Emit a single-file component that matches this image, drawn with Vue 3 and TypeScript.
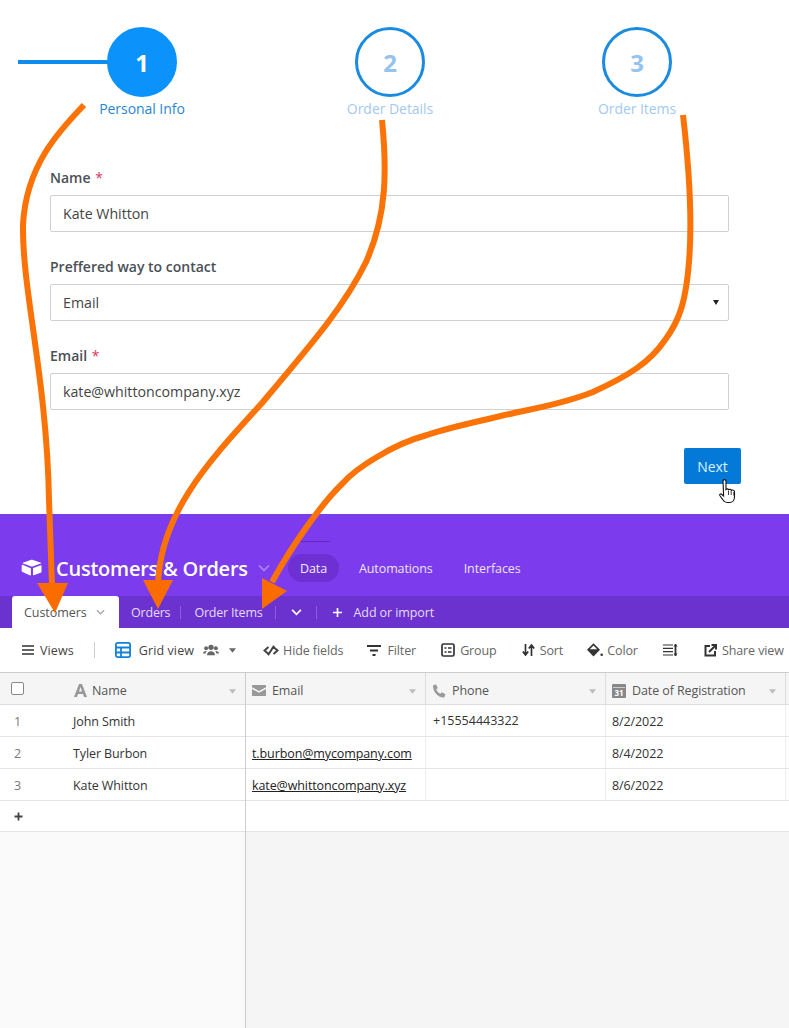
<script setup lang="ts">
const steps = [
  { n: 1, label: 'Personal Info', active: true },
  { n: 2, label: 'Order Details', active: false },
  { n: 3, label: 'Order Items', active: false },
]
const rows = [
  { n: 1, name: 'John Smith', email: '', phone: '+15554443322', date: '8/2/2022' },
  { n: 2, name: 'Tyler Burbon', email: 't.burbon@mycompany.com', phone: '', date: '8/4/2022' },
  { n: 3, name: 'Kate Whitton', email: 'kate@whittoncompany.xyz', phone: '', date: '8/6/2022' },
]
</script>

<template>
  <div class="page">
    <section class="wizard">
      <div class="stepper">
        <div v-for="s in steps" :key="s.n" class="step" :class="{ active: s.active }">
          <div class="circle">{{ s.n }}</div>
          <div class="step-label">{{ s.label }}</div>
        </div>
      </div>
      <form class="form" @submit.prevent>
        <div class="field">
          <div class="label">Name <span class="req">*</span></div>
          <div class="input">Kate Whitton</div>
        </div>
        <div class="field">
          <div class="label">Preffered way to contact</div>
          <div class="input select">Email<span class="caret"></span></div>
        </div>
        <div class="field">
          <div class="label">Email <span class="req">*</span></div>
          <div class="input">kate@whittoncompany.xyz</div>
        </div>
      </form>
      <div class="actions"><button class="next" type="button">Next</button></div>
    </section>

    <section class="base">
      <header class="topbar">
        <span class="notch"></span>
        <div class="brand">
          <svg class="logo" viewBox="0 0 22 20" width="22" height="18" preserveAspectRatio="none">
            <path fill="#fff" d="M9.600 1.100 2 4.200c-.5.200-.5.600 0 .8l7.700 3c.8.300 1.600.3 2.400 0l7.800-3c.5-.2.500-.6 0-.8l-7.900-3.100c-.8-.3-1.600-.3-2.400 0z" />
            <path fill="#fff" d="M12 10.500v7.100c0 .4.400.6.700.5l7.500-3.100c.2-.1.300-.3.300-.5V7.400c0-.4-.4-.6-.7-.5l-7.600 3.100c-.2.100-.2.300-.2.500z" />
            <path fill="#fff" d="M9.700 10.200 1.500 6.500C1.100 6.400.700 6.600.700 7v6.700c0 .2.100.4.300.5l8.200 4c.3.100.7-.1.700-.5v-7c0-.2-.1-.4-.2-.5z" />
          </svg>
          <span class="title">Customers &amp; Orders</span>
          <svg class="title-chev" viewBox="0 0 12 8" width="12" height="8"><path d="M1 1.500 6 6.500 11 1.500" fill="none" stroke="#a77cf3" stroke-width="1.800" /></svg>
        </div>
        <nav class="topnav">
          <span class="pill">Data</span>
          <span class="navitem">Automations</span>
          <span class="navitem">Interfaces</span>
        </nav>
      </header>

      <div class="tabs">
        <div class="tab-active">Customers
          <svg viewBox="0 0 10 6" width="9" height="6"><path d="M1 1 5 5 9 1" fill="none" stroke="#aaa" stroke-width="1.500" /></svg>
        </div>
        <span class="tab first">Orders</span>
        <i class="sep"></i>
        <span class="tab">Order Items</span>
        <i class="sep"></i>
        <svg class="more" viewBox="0 0 12 8" width="11" height="7"><path d="M1 1 6 6 11 1" fill="none" stroke="#fff" stroke-width="2" /></svg>
        <i class="sep"></i>
        <span class="add"><svg viewBox="0 0 12 12" width="11" height="11"><path d="M6 1v10M1 6h10" stroke="#fff" stroke-width="1.800" /></svg>Add or import</span>
      </div>

      <div class="toolbar">
        <span class="tool views">
          <svg viewBox="0 0 12 10" width="12" height="10"><path d="M0 1h12M0 5h12M0 9h12" stroke="#333" stroke-width="1.600" /></svg>
          <b>Views</b>
        </span>
        <i class="tool-sep"></i>
        <span class="tool grid-view">
          <svg viewBox="0 0 16 16" width="16" height="16">
            <rect x="0.900" y="0.900" width="14.200" height="14.200" rx="1.800" fill="#fff" stroke="#1283da" stroke-width="1.800" />
            <path d="M1 5.500h14M1 10.500h14M6 5.500v10" stroke="#1283da" stroke-width="1.800" />
          </svg>
          <b>Grid view</b>
          <svg class="people" viewBox="0 0 18 13" width="16" height="12">
            <circle cx="9" cy="3.500" r="3" fill="#666" /><circle cx="3.500" cy="4.500" r="2.200" fill="#666" /><circle cx="14.500" cy="4.500" r="2.200" fill="#666" />
            <path d="M4.500 12.500c0-3 2-4.500 4.500-4.500s4.500 1.500 4.500 4.500zM0 10.500c0-2 1.500-3 3.500-3 .5 0 .7.200 .7.200C3.500 8.500 3 9.500 3 10.500zM18 10.500c0-2-1.500-3-3.500-3-.5 0-.7.200-.7.200.7.800 1.200 1.800 1.200 2.800z" fill="#666" />
          </svg>
          <svg class="tri" viewBox="0 0 8 5" width="7" height="5"><path d="M0 0h8L4 5z" fill="#666" /></svg>
        </span>
        <span class="tool hide">
          <svg viewBox="0 0 16 11" width="16" height="11"><path d="M5.500 2 1.500 5.500l4 3.500M10.500 2l4 3.500-4 3.500M11 .7 5 10.300" fill="none" stroke="#444" stroke-width="2" /></svg>
          Hide fields
        </span>
        <span class="tool filter">
          <svg viewBox="0 0 14 11" width="14" height="11"><path d="M0 1h14M3 5.500h8M5.500 10h3" stroke="#333" stroke-width="2" /></svg>
          Filter
        </span>
        <span class="tool group">
          <svg viewBox="0 0 14 14" width="14" height="14"><rect x="1" y="1" width="12" height="12" rx="1.500" fill="none" stroke="#333" stroke-width="1.700" /><path d="M3.500 5h2M7 5h3.500M3.500 9h2M7 9h3.500" stroke="#333" stroke-width="1.700" /></svg>
          Group
        </span>
        <span class="tool sort">
          <svg viewBox="0 0 13 12" width="13" height="12"><path d="M3.500 0v10M.8 7.500l2.700 3.500 2.700-3.500M9.500 12V2M6.800 4.500 9.500 1l2.700 3.500" fill="none" stroke="#333" stroke-width="1.700" /></svg>
          Sort
        </span>
        <span class="tool color">
          <svg viewBox="0 0 16 14" width="16" height="14"><path d="M6.500 .2 13 6.700 6.500 13.500 0 6.700z" fill="#333" /><path d="M6.500 2.600 10.200 6.300H2.800z" fill="#fff" /><circle cx="14.700" cy="11.700" r="1.300" fill="#333" /></svg>
          Color
        </span>
        <span class="tool density">
          <svg viewBox="0 0 15 12" width="15" height="12"><path d="M0 1h10M0 4.300h10M0 7.700h10M0 11h10" stroke="#333" stroke-width="1.200" /><path d="M12.500 0v12" stroke="#333" stroke-width="1.800" /><path d="M10.500 2.500 12.500 0l2 2.500zM10.500 9.500l2 2.500 2-2.500z" fill="#333" /></svg>
        </span>
        <span class="tool share">
          <svg viewBox="0 0 13 13" width="13" height="13"><path d="M6 2H1.500v9.500H11V7" fill="none" stroke="#333" stroke-width="2" /><path d="M5 8l6-6M7.500 1H12v4.500" fill="none" stroke="#333" stroke-width="2" /></svg>
          Share view
        </span>
      </div>

      <div class="table">
        <div class="left">
          <div class="head-row left-head">
            <span class="check"></span>
            <svg class="ficon a" viewBox="0 0 13 13" width="13" height="13"><path d="M5 0h3l5 13h-3l-1-3H4l-1 3H0zM6.500 3 5 7.500h3z" fill="#999" fill-rule="evenodd" /></svg>
            <span class="hname">Name</span>
            <svg class="tri-h" viewBox="0 0 8 5" width="7" height="5"><path d="M0 0h8L4 5z" fill="#bbb" /></svg>
          </div>
          <div v-for="r in rows" :key="r.n" class="row left-row">
            <span class="num">{{ r.n }}</span><span class="name">{{ r.name }}</span>
          </div>
          <div class="row add-row">
            <svg viewBox="0 0 9 9" width="9" height="9"><path d="M4.500 .5v8M.5 4.500h8" stroke="#444" stroke-width="1.800" /></svg>
          </div>
          <div class="rest left-rest"></div>
        </div>
        <div class="right">
          <div class="head-row cols">
            <div class="hcell">
              <svg viewBox="0 0 14 11" width="14" height="11"><path d="M0 0h14v2.200L7 6 0 2.200zM0 4l7 3.800L14 4v7H0z" fill="#999" /></svg>
              <span>Email</span>
              <svg class="tri-h" viewBox="0 0 8 5" width="7" height="5"><path d="M0 0h8L4 5z" fill="#bbb" /></svg>
            </div>
            <div class="hcell">
              <svg viewBox="0 0 14 14" width="14" height="14"><path d="M1 1.500 3.800.3l2 3.700-1.500 1.500c.6 1.800 2.200 3.500 4 4.200l1.500-1.500 3.700 2-1.300 3.300C6.200 14 .8 8 1 1.500z" fill="#999" /></svg>
              <span>Phone</span>
              <svg class="tri-h" viewBox="0 0 8 5" width="7" height="5"><path d="M0 0h8L4 5z" fill="#bbb" /></svg>
            </div>
            <div class="hcell">
              <svg viewBox="0 0 14 14" width="14" height="14"><rect width="14" height="14" rx="1" fill="#888" /><path d="M1 3.500h12" stroke="#ddd" stroke-width="0.800" /><text x="7" y="11.500" text-anchor="middle" font-size="8" font-weight="700" fill="#fff" font-family="'Open Sans', sans-serif">31</text></svg>
              <span>Date of Registration</span>
              <svg class="tri-h" viewBox="0 0 8 5" width="7" height="5"><path d="M0 0h8L4 5z" fill="#bbb" /></svg>
            </div>
            <div class="hcell tail"></div>
          </div>
          <div v-for="r in rows" :key="r.n" class="row cols">
            <div class="cell"><a v-if="r.email" class="mail">{{ r.email }}</a></div>
            <div class="cell phone">{{ r.phone }}</div>
            <div class="cell">{{ r.date }}</div>
            <div class="cell tail"></div>
          </div>
          <div class="row empty"></div>
          <div class="rest"></div>
        </div>
      </div>
    </section>

    <svg class="overlay" viewBox="0 0 789 1028" width="789" height="1028">
      <g fill="none" stroke="#fb7307" stroke-width="6">
        <path d="M84 105C60 130 26 165 23 225C22 290 47 380 49 500L52 585" />
        <path d="M382 120C387 170 387 215 366 262C345 305 315 340 262 403C215 455 160 510 158 585" />
        <path d="M683 115C690 175 692 225 689 262C686 300 680 320 665 340C650 362 630 375 593 392C560 405 530 409 510 414C480 421 450 427 427 435C405 441 390 449 377 457C360 467 350 475 343 483C325 500 295 540 272 582" />
      </g>
      <g fill="#fb6c00">
        <path d="M37 583H68L55 613Z" />
        <path d="M143 580H173L158 609Z" />
        <path d="M262 578 287 591 262 609Z" />
      </g>
      <g>
        <path d="M723 481c0-1.800 3-1.800 3 0v8.500c1-1 2.400-.7 2.700.3 1-.9 2.500-.5 2.700.5 1-.6 3-.2 3.100 1.200v5.500c0 3-1.900 5.500-5 5.500h-2.300c-2 0-3.200-.8-4.200-2.500l-3.200-4.500c-.6-1 .7-2.200 1.800-1.300l2 1.700z" fill="#fff" stroke="#111" stroke-width="1.100" />
        <path d="M728.500 491v4M731.200 491v4M733.800 492v3.500" stroke="#111" stroke-width="0.800" />
      </g>
    </svg>
  </div>
</template>

<style scoped>
.page {
  position: relative;
  width: 789px;
  height: 1028px;
  overflow: hidden;
  background: #fff;
  font-family: "Open Sans", "Noto Sans", sans-serif;
  color: #333;
}
.wizard {
  height: 514px;
  box-sizing: border-box;
  padding-top: 27px;
}
.stepper {
  display: grid;
  grid-template-columns: 248px 248px 246px;
  margin-left: 18px;
}
.step {
  display: flex;
  flex-direction: column;
  align-items: center;
  position: relative;
}
.step.active::before {
  content: "";
  position: absolute;
  left: 0;
  right: 50%;
  top: 33px;
  height: 4px;
  background: #0d8cf0;
}
.circle {
  position: relative;
  width: 70px;
  height: 70px;
  box-sizing: border-box;
  border: 3px solid #1a8be0;
  border-radius: 50%;
  background: #fff;
  color: #93c3ee;
  font-size: 24px;
  font-weight: 700;
  display: flex;
  align-items: center;
  justify-content: center;
}
.active .circle {
  background: #0b93fb;
  border-color: #0b93fb;
  color: #fff;
}
.step-label {
  margin-top: 2px;
  font-size: 14px;
  line-height: 20px;
  letter-spacing: -0.05px;
  color: #a3c9ee;
}
.active .step-label { color: #2a86d2; }
.form {
  padding: 0 60px 0 50px;
  margin-top: 49px;
  display: flex;
  flex-direction: column;
  gap: 25px;
}
.label {
  font-size: 14px;
  line-height: 20px;
  font-weight: 600;
  color: #4a5056;
  margin-bottom: 7px;
}
.req { color: #d9365f; font-weight: 400; margin-left: 1px; }
.input {
  height: 37px;
  box-sizing: border-box;
  border: 1px solid #d0d0d0;
  border-radius: 2px;
  padding-left: 12px;
  font-size: 14.200px;
  line-height: 35px;
  color: #444;
  position: relative;
}
.caret {
  position: absolute;
  right: 9px;
  top: 15px;
  width: 0;
  height: 0;
  border-left: 3.500px solid transparent;
  border-right: 3.500px solid transparent;
  border-top: 5px solid #222;
}
.actions {
  display: flex;
  justify-content: flex-end;
  padding-right: 48px;
  margin-top: 38px;
}
.next {
  width: 57px;
  height: 36px;
  border: 0;
  border-radius: 2px;
  background: #0579d8;
  color: #d8f3ff;
  font: 14px "Open Sans", sans-serif;
  letter-spacing: -0.1px;
  padding: 0;
}
.topbar {
  height: 82px;
  background: #7c3bec;
  position: relative;
  display: flex;
  align-items: flex-start;
  padding-top: 40px;
  box-sizing: border-box;
}
.notch {
  position: absolute;
  left: 301px;
  top: 27px;
  width: 29px;
  height: 1px;
  background: #5f2bb8;
}
.brand {
  display: flex;
  align-items: center;
  height: 28px;
  padding-left: 21px;
  width: 288px;
  box-sizing: border-box;
  color: #fff;
}
.logo { margin-right: 13px; margin-top: -1px; }
.title {
  font-size: 20px;
  font-weight: 600;
  letter-spacing: -0.24px;
  white-space: nowrap;
}
.title-chev { margin-left: 10px; }
.topnav {
  display: flex;
  align-items: center;
  height: 28px;
  font-size: 12.500px;
  letter-spacing: -0.1px;
  color: #ece4fb;
}
.pill {
  width: 51px;
  height: 28px;
  border-radius: 14px;
  background: #6d30d2;
  display: flex;
  align-items: center;
  justify-content: center;
  margin-right: 20px;
  color: #f3edfd;
}
.navitem { margin-right: 31px; white-space: nowrap; }
.tabs {
  height: 32px;
  background: #6b32cf;
  display: flex;
  align-items: center;
  padding-left: 12px;
  font-size: 12.500px;
  letter-spacing: -0.2px;
  color: #e6dcf8;
}
.tab-active {
  width: 107px;
  height: 32px;
  box-sizing: border-box;
  padding-left: 12px;
  background: #fff;
  color: #555;
  border-radius: 3px 3px 0 0;
  display: flex;
  align-items: center;
  gap: 9px;
  white-space: nowrap;
  letter-spacing: -0.05px;
}
.tab { white-space: nowrap; margin: 0 12px 0 13px; }
.tab.first { margin-left: 12px; margin-right: 10px; }
.sep {
  width: 1px;
  height: 13px;
  background: #8a5fdb;
  flex: none;
}
.more { margin: 0 14px 0 15px; flex: none; }
.add {
  display: flex;
  align-items: center;
  gap: 11px;
  margin-left: 15px;
  white-space: nowrap;
  letter-spacing: -0.1px;
}
.toolbar {
  height: 44px;
  display: flex;
  align-items: center;
  font-size: 12.500px;
  letter-spacing: -0.1px;
  color: #666;
  white-space: nowrap;
  overflow: hidden;
}
.tool { display: flex; align-items: center; gap: 5px; flex: none; }
.tool b { font-weight: 400; color: #444; letter-spacing: 0.1px; }
.views { margin-left: 22px; gap: 6px; }
.tool-sep { width: 1px; height: 16px; background: #ccc; margin: 0 20px 0 20px; flex: none; }
.grid-view { gap: 8px; }
.people { margin-left: 1px; }
.tri { margin-left: 2px; }
.hide { margin-left: 27px; gap: 4px; }
.filter { margin-left: 24px; gap: 6px; }
.group { margin-left: 25px; }
.sort { margin-left: 25px; }
.color { margin-left: 24px; gap: 4px; }
.density { margin-left: 25px; }
.share { margin-left: 26px; gap: 5px; }
.table {
  height: 356px;
  display: flex;
  border-top: 1px solid #ccc;
  font-size: 12.500px;
  letter-spacing: -0.1px;
  box-sizing: border-box;
}
.left {
  width: 246px;
  flex: none;
  border-right: 1px solid #ccc;
  box-sizing: border-box;
  display: flex;
  flex-direction: column;
}
.right { flex: 1; min-width: 0; display: flex; flex-direction: column; background: #f5f5f5; }
.head-row {
  height: 32px;
  box-sizing: border-box;
  background: #f5f5f5;
  border-bottom: 1px solid #ddd;
  color: #555;
}
.left-head {
  display: flex;
  align-items: center;
  position: relative;
  padding-top: 4px;
}
.check {
  margin-left: 11px;
  margin-top: -4px;
  width: 11px;
  height: 11px;
  background: #fff;
  border: 1px solid #888;
  border-radius: 2px;
}
.ficon { margin-left: 50px; }
.hname { margin-left: 5px; }
.tri-h { position: absolute; right: 9px; top: 16px; }
.row {
  height: 32px;
  box-sizing: border-box;
  border-bottom: 1px solid #e4e4e4;
  background: #fff;
  color: #333;
}
.left-row { display: flex; align-items: center; padding-top: 1px; }
.num { width: 73px; padding-left: 14px; box-sizing: border-box; color: #777; flex: none; }
.add-row {
  height: 31px;
  display: flex;
  align-items: center;
  padding-left: 14px;
}
.rest { flex: 1; background: #f5f5f5; }
.left-rest { background: #fafafa; }
.cols {
  display: grid;
  grid-template-columns: 180px 180px 180px 1fr;
}
.hcell {
  position: relative;
  display: flex;
  align-items: center;
  gap: 6px;
  padding: 4px 0 0 6px;
  border-right: 1px solid #ddd;
}
.tail { border-right: 0; }
.cell {
  padding-left: 6px;
  line-height: 33px;
  border-right: 1px solid #eee;
  white-space: nowrap;
  overflow: hidden;
}
.cell.phone { line-height: 31px; letter-spacing: 0; padding-left: 7px; }
.mail { color: #222; text-decoration: underline; }
.empty { height: 31px; }
.overlay {
  position: absolute;
  left: 0;
  top: 0;
  pointer-events: none;
}
</style>
